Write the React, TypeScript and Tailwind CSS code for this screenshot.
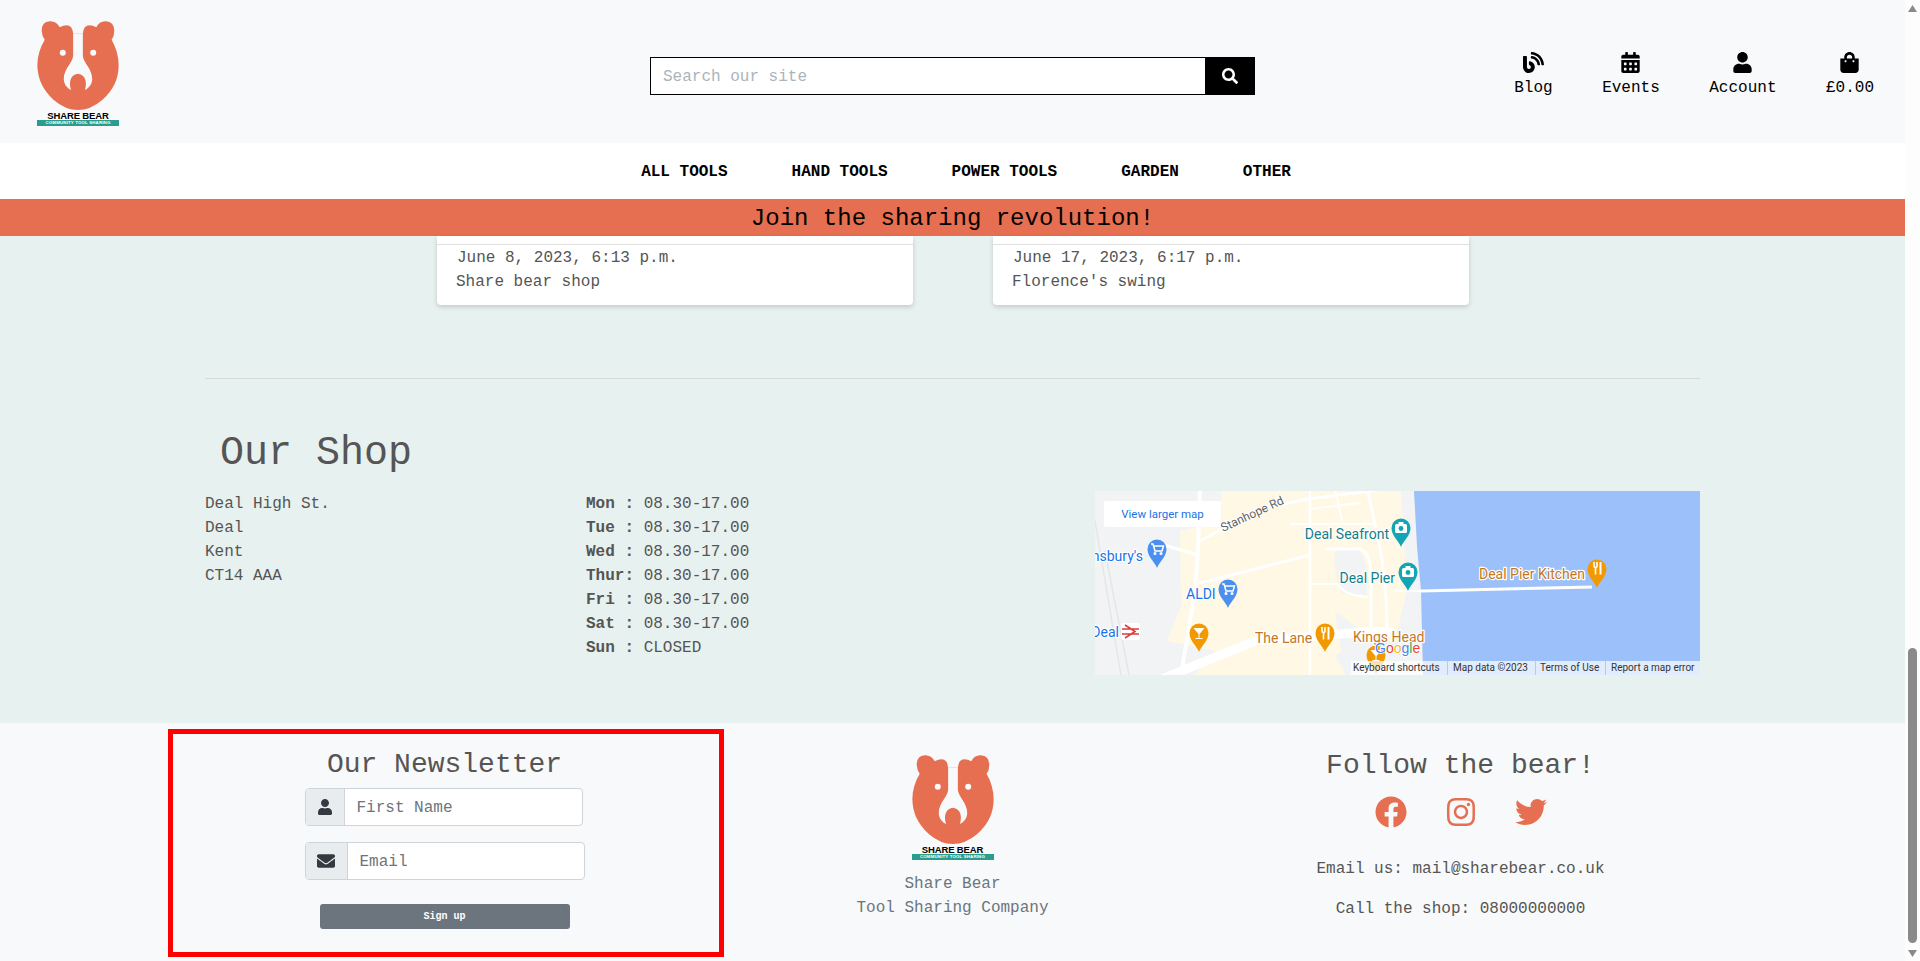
import React from "react";
import { FaBlog, FaCalendarAlt, FaUser, FaShoppingBag, FaSearch, FaEnvelope, FaFacebook, FaInstagram, FaTwitter } from "react-icons/fa";

function Logo() {
  return (
    <div className="flex w-[82px] flex-col items-center">
      <svg viewBox="111 62 243 266" className="block h-[89px] w-[82px]" aria-hidden="true">
        <path fill="#e76f51" d="M232 100 L218 100 Q216 75 198 75 Q188 75 178 81 Q168 62 148 63 Q123 65 124 92 Q125 108 133 118 Q111 155 111 195 Q112 255 160 298 Q195 328 232 328 Q270 328 305 298 Q354 255 354 195 Q354 155 333 118 Q341 108 341 92 Q341 65 316 63 Q296 62 287 81 Q277 75 267 75 Q249 75 247 100 Z" />
        <path fill="#f8f9fa" d="M218 100 L218 165 C218 185 190 205 190 235 C190 250 200 262 212 268 C205 250 208 222 232 220 C257 222 260 250 253 268 C265 262 275 250 275 235 C275 205 247 185 247 165 L247 100 Z" />
        <circle cx="187" cy="157" r="9" fill="#f8f9fa" />
        <circle cx="278" cy="157" r="9" fill="#f8f9fa" />
      </svg>
      <div className="mt-[1px] text-[9.5px] leading-[9px] font-bold tracking-[-0.15px] text-black [font-family:'Liberation_Sans',sans-serif]">SHARE BEAR</div>
      <div className="w-full bg-[#2a9d8f] text-center text-[4.4px] leading-[6px] font-bold tracking-[0.15px] whitespace-nowrap text-white [font-family:'Liberation_Sans',sans-serif]">COMMUNITY TOOL SHARING</div>
    </div>
  );
}

function Pin({ x, y, color }: { x: number; y: number; color: string }) {
  return (
    <path
      fill={color}
      d={`M${x} ${y + 19} C${x - 2} ${y + 13} ${x - 9.5} ${y + 8} ${x - 9.5} ${y} A9.5 9.5 0 0 1 ${x + 9.5} ${y} C${x + 9.5} ${y + 8} ${x + 2} ${y + 13} ${x} ${y + 19} Z`}
    />
  );
}

function Camera({ x, y }: { x: number; y: number }) {
  return (
    <g>
      <rect x={x - 6} y={y - 4} width="12" height="9" rx="1.5" fill="#fff" />
      <rect x={x - 2.5} y={y - 6} width="5" height="3" fill="#fff" />
      <circle cx={x} cy={y + 0.5} r="2.4" fill="#12a5b5" />
    </g>
  );
}

function Cart({ x, y }: { x: number; y: number }) {
  return (
    <g fill="none" stroke="#fff" strokeWidth="1.5">
      <path d={`M${x - 6} ${y - 5} h2 l2 7 h7 l1.5 -5 h-9.5`} />
      <circle cx={x - 2} cy={y + 4.5} r="0.8" fill="#fff" />
      <circle cx={x + 4} cy={y + 4.5} r="0.8" fill="#fff" />
    </g>
  );
}

function Fork({ x, y }: { x: number; y: number }) {
  return (
    <g fill="none" stroke="#fff" strokeWidth="1.6">
      <path d={`M${x - 3} ${y - 6} v4 a1.5 1.5 0 0 0 1.5 1.5 v7`} />
      <path d={`M${x} ${y - 6} v4 a1.5 1.5 0 0 1 -1.5 1.5`} />
      <path d={`M${x + 3.5} ${y - 6} v12.5`} strokeWidth="2" />
    </g>
  );
}

function Cocktail({ x, y }: { x: number; y: number }) {
  return (
    <g fill="#fff">
      <path d={`M${x - 5.5} ${y - 5} h11 l-5 6 v4 h3 v1 h-7 v-1 h3 v-4 Z`} />
    </g>
  );
}

function MapLabel({ x, y, color, size = 14, anchor = "start", children }: { x: number; y: number; color: string; size?: number; anchor?: "start" | "end" | "middle"; children: React.ReactNode }) {
  return (
    <text x={x} y={y} fill={color} fontSize={size} textAnchor={anchor} stroke="#fff" strokeWidth="2.4" paintOrder="stroke" strokeLinejoin="round" className="[font-family:Roboto,sans-serif]">
      {children}
    </text>
  );
}

function ShopMap() {
  return (
    <svg viewBox="0 0 605 184" className="block h-[184px] w-[605px] shrink-0">
      <rect width="605" height="184" fill="#f1f3f4" />
      <path fill="#fff8e5" d="M126 0 H312 L320 50 L326 100 L328 184 L300 184 L280 150 L240 120 L250 184 L100 184 L120 160 L72 150 L86 115 L85 40 L126 30 Z" />
      <path fill="#f1f3f4" d="M240 60 Q244 54 256 56 Q270 60 272 80 L272 104 L246 102 Q238 80 240 60 Z" />
      <path fill="#f1f3f4" d="M306 0 L316 0 L326 100 L328 184 L252 184 L240 165 L262 150 L300 150 L312 100 Z" />
      <path fill="#9cc0f9" d="M319 0 H605 V184 H328 L326 100 L322 55 Z" />
      <g fill="none" stroke="#fff" strokeLinecap="round" strokeLinejoin="round">
        <path strokeWidth="4" d="M105 -4 L103 60 L100 100 L86 184" />
        <path strokeWidth="3" d="M107 49 L160 20 L207 9" />
        <path strokeWidth="3" d="M207 9 L290 -2" />
        <path strokeWidth="3" d="M62 52 L103 64" />
        <path strokeWidth="3" d="M105 92 L215 64" />
        <path strokeWidth="2.5" d="M215 -2 V184" />
        <path strokeWidth="3" d="M272 -2 C284 50 292 80 292 140" />
        <path strokeWidth="2" d="M196 33 L280 33 M215 18 L264 12 M240 -2 L247 30" />
        <path strokeWidth="3" d="M232 58 H265 Q276 62 276 85 V150" />
        <path strokeWidth="2" d="M215 93 H243 Q248 104 272 106" />
        <path strokeWidth="2" d="M300 100 L326 100" />
        <path strokeWidth="9" d="M62 190 L160 150 L270 141 L295 141" />
        <path strokeWidth="1.5" stroke="#e4e6e8" d="M0 30 L26 184 M10 60 L34 184" />
      </g>
      <path fill="none" stroke="#fff" strokeWidth="3" d="M326 100 L497 96" />
      <text x="128" y="41" fill="#5f6368" fontSize="12" stroke="#fff" strokeWidth="2" paintOrder="stroke" transform="rotate(-25 128 41)" className="[font-family:Roboto,sans-serif]">Stanhope Rd</text>

      <MapLabel x={294} y={48} color="#12808c" anchor="end">Deal Seafront</MapLabel>
      <Pin x={306} y={37} color="#12a5b5" />
      <Camera x={306} y={37} />
      <MapLabel x={300} y={92} color="#12808c" anchor="end">Deal Pier</MapLabel>
      <Pin x={313} y={81} color="#12a5b5" />
      <Camera x={313} y={81} />
      <MapLabel x={384} y={88} color="#c5771f">Deal Pier Kitchen</MapLabel>
      <Pin x={502} y={78} color="#f29900" />
      <Fork x={502} y={77} />
      <MapLabel x={48} y={70} color="#1a73e8" anchor="end">Sainsbury's</MapLabel>
      <Pin x={62} y={58} color="#4b8ff0" />
      <Cart x={62} y={58} />
      <MapLabel x={91} y={108} color="#1a73e8">ALDI</MapLabel>
      <Pin x={133} y={98} color="#4b8ff0" />
      <Cart x={133} y={98} />
      <MapLabel x={24} y={146} color="#1a73e8" anchor="end">Deal</MapLabel>
      <rect x="26" y="132" width="19" height="17" rx="3" fill="#fff" />
      <path fill="none" stroke="#d93d3d" strokeWidth="1.6" d="M27 138 H44 M27 143 H44 M30 134 L40 140.500 L30 147" />
      <Pin x={104} y={142} color="#f29900" />
      <Cocktail x={104} y={142} />
      <MapLabel x={160} y={152} color="#c5771f">The Lane</MapLabel>
      <Pin x={230} y={142} color="#f29900" />
      <Fork x={230} y={142} />
      <Pin x={281} y={164} color="#f29900" />
      <Cocktail x={281} y={164} />
      <MapLabel x={258} y={151} color="#c5771f">Kings Head</MapLabel>
      <text x="280" y="162" fontSize="14" stroke="#fff" strokeWidth="1.6" paintOrder="stroke" className="[font-family:'Liberation_Sans',sans-serif]">
        <tspan fill="#4285f4">G</tspan><tspan fill="#ea4335">o</tspan><tspan fill="#fbbc05">o</tspan><tspan fill="#4285f4">g</tspan><tspan fill="#34a853">l</tspan><tspan fill="#ea4335">e</tspan>
      </text>

      <rect x="9" y="10" width="117" height="26" rx="2" fill="#fff" />
      <text x="67.500" y="27" fill="#1a73e8" fontSize="11.500" textAnchor="middle" className="[font-family:Roboto,sans-serif]">View larger map</text>

      <rect x="256" y="170" width="349" height="14" fill="#fff" fillOpacity="0.7" />
      <g fill="#333" fontSize="10" className="[font-family:Roboto,sans-serif]">
        <text x="258" y="180">Keyboard shortcuts</text>
        <text x="358" y="180">Map data ©2023</text>
        <text x="445" y="180">Terms of Use</text>
        <text x="516" y="180">Report a map error</text>
      </g>
      <path stroke="#c8c8c8" d="M352.500 170 V184 M440.500 170 V184 M510.500 170 V184" />
    </svg>
  );
}

const navItems = ["ALL TOOLS", "HAND TOOLS", "POWER TOOLS", "GARDEN", "OTHER"];
const hours: [string, string][] = [
  ["Mon :", "08.30-17.00"],
  ["Tue :", "08.30-17.00"],
  ["Wed :", "08.30-17.00"],
  ["Thur:", "08.30-17.00"],
  ["Fri :", "08.30-17.00"],
  ["Sat :", "08.30-17.00"],
  ["Sun :", "CLOSED"],
];

function HeaderLink({ icon, label }: { icon: React.ReactNode; label: string }) {
  return (
    <a className="flex flex-col items-center text-black">
      <span className="flex h-[24px] items-center text-[21px]">{icon}</span>
      <span className="mt-[2px] leading-[24px] whitespace-pre">{label}</span>
    </a>
  );
}

export default function App() {
  return (
    <div className="flex h-[961px] w-[1920px] overflow-hidden bg-[#fdfdfd] text-[16px] text-[#555555] [font-family:'Liberation_Mono',monospace]">
      <div className="flex w-[1905px] flex-col">
        <header className="grid h-[143px] grid-cols-[1fr_605px_1fr] bg-[#f8f9fa]">
          <div className="pt-[21px] pl-[37px]">
            <Logo />
          </div>
          <div className="pt-[57px]">
            <div className="flex h-[38px] border border-black bg-white">
              <input placeholder="Search our site" className="min-w-0 flex-1 bg-white px-[12px] pt-[2px] text-[16px] outline-none placeholder:text-[#aab4bc]" />
              <button className="flex w-[49px] items-center justify-center bg-black text-[16px] text-white">
                <FaSearch />
              </button>
            </div>
          </div>
          <div className="flex items-start justify-end gap-[49.5px] pt-[50px] pr-[31px]">
            <HeaderLink icon={<FaBlog />} label="Blog" />
            <HeaderLink icon={<FaCalendarAlt />} label="Events" />
            <HeaderLink icon={<FaUser />} label="Account" />
            <HeaderLink icon={<FaShoppingBag />} label="£0.00" />
          </div>
        </header>

        <nav className="flex h-[56px] items-center justify-center gap-[64px] bg-white pt-[2px] pl-[27px] font-bold text-black">
          {navItems.map((n) => (
            <a key={n}>{n}</a>
          ))}
        </nav>

        <div className="flex h-[37px] items-center justify-center bg-[#e76f51] pt-[2px] text-[24px] text-black">Join the sharing revolution!</div>

        <main className="flex h-[487px] flex-col bg-[#e7f1ef]">
          <div className="flex justify-center gap-[80px] pl-[1px]">
            {[
              ["June 8, 2023, 6:13 p.m.", "Share bear shop"],
              ["June 17, 2023, 6:17 p.m.", "Florence's swing"],
            ].map(([d, t]) => (
              <div key={t} className="h-[69px] w-[476px] rounded-b-[4px] bg-white shadow-[0_2px_5px_rgba(0,0,0,0.16)]">
                <div className="h-[9px] border-b border-[#dfdfdf]" />
                <div className="pt-[1px] pl-[19px] leading-[24px]">
                  <div className="pl-[1px]">{d}</div>
                  <div>{t}</div>
                </div>
              </div>
            ))}
          </div>

          <div className="px-[205px]">
            <hr className="mt-[73px] border-t border-[#d5dad9]" />
            <h2 className="mt-[51px] mb-[13px] pl-[15px] text-[40px] leading-[48px] font-normal">Our Shop</h2>
            <div className="flex">
              <div className="w-[381px] pt-[1px] leading-[24px]">
                <div>Deal High St.</div>
                <div>Deal</div>
                <div>Kent</div>
                <div>CT14 AAA</div>
              </div>
              <div className="w-[509px] pt-[1px] leading-[24px]">
                {hours.map(([d, h]) => (
                  <div key={d} className="whitespace-pre">
                    <b>{d}</b> {h}
                  </div>
                ))}
              </div>
              <ShopMap />
            </div>
          </div>
        </main>

        <footer className="relative grid h-[238px] grid-cols-3 bg-[#f8f9fa] px-[190.5px]">
          <div className="flex flex-col items-center pt-[24px]">
            <h3 className="text-[28px] leading-[36px] font-normal">Our Newsletter</h3>
            <div className="mt-[5px] mr-[2px] flex h-[38px] w-[278px] overflow-hidden rounded-[4px] border border-[#ced4da] bg-white">
              <span className="flex w-[39px] shrink-0 items-center justify-center border-r border-[#ced4da] bg-[#e9ecef] text-[#343a40]">
                <FaUser />
              </span>
              <input placeholder="First Name" className="min-w-0 flex-1 px-[12px] pt-[2px] outline-none placeholder:text-[#6c757d]" />
            </div>
            <div className="mt-[16px] flex h-[38px] w-[280px] overflow-hidden rounded-[4px] border border-[#ced4da] bg-white">
              <span className="flex w-[42px] shrink-0 items-center justify-center border-r border-[#ced4da] bg-[#e9ecef] text-[18px] text-[#343a40]">
                <FaEnvelope />
              </span>
              <input placeholder="Email" className="min-w-0 flex-1 px-[12px] pt-[2px] outline-none placeholder:text-[#6c757d]" />
            </div>
            <button className="mt-[24px] h-[25px] w-[250px] rounded-[3px] bg-[#6c757d] text-[10px] font-bold text-white">Sign up</button>
          </div>

          <div className="flex flex-col items-center pt-[32px] text-[#6c757d]">
            <Logo />
            <div className="mt-[12px] text-center leading-[24px]">
              <div>Share Bear</div>
              <div>Tool Sharing Company</div>
            </div>
          </div>

          <div className="flex flex-col items-center pt-[25px]">
            <h3 className="text-[28px] leading-[36px] font-normal">Follow the bear!</h3>
            <div className="mt-[12px] flex h-[32px] items-center gap-[38px] text-[32px] text-[#e76f51]">
              <FaFacebook />
              <FaInstagram />
              <FaTwitter />
            </div>
            <div className="mt-[29px] leading-[24px]">Email us: mail@sharebear.co.uk</div>
            <div className="mt-[16px] leading-[24px]">Call the shop: 08000000000</div>
          </div>

          <div className="pointer-events-none absolute top-[6px] left-[168px] h-[228px] w-[556px] border-[5px] border-[#ff0000]" />
        </footer>
      </div>

      <div className="flex w-[15px] flex-col items-center justify-between bg-[#fdfdfd] pt-[5px] pb-[4px]">
        <svg width="9" height="7" viewBox="0 0 9 7"><path d="M4.500 0 L9 7 H0 Z" fill="#8a8a8a" /></svg>
        <div className="flex flex-1 flex-col items-center justify-end pb-[7px]">
          <div className="h-[295px] w-[9px] rounded-full bg-[#8a8a8a]" />
        </div>
        <svg width="9" height="7" viewBox="0 0 9 7"><path d="M4.500 7 L9 0 H0 Z" fill="#8a8a8a" /></svg>
      </div>
    </div>
  );
}
